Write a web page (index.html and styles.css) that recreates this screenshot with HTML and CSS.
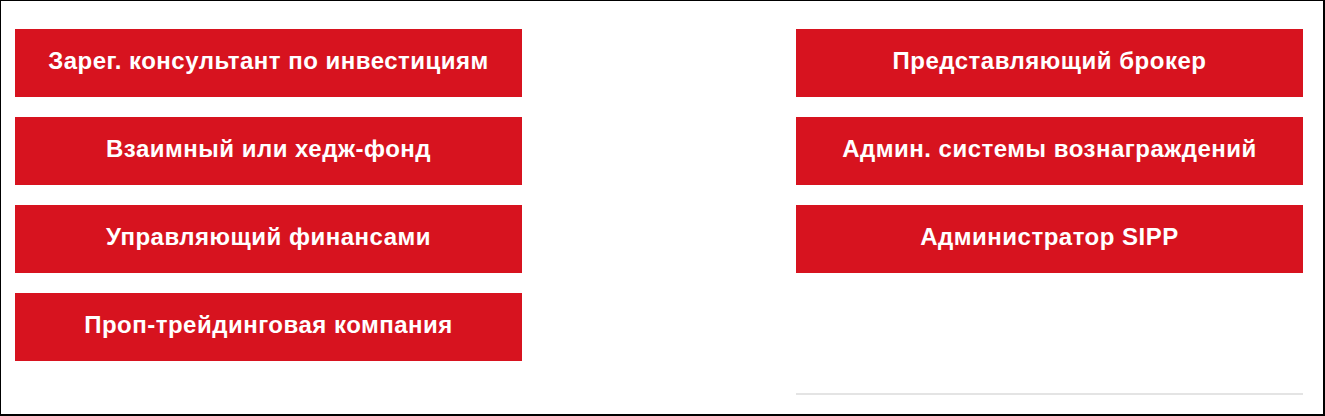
FILE: index.html
```html
<!DOCTYPE html>
<html lang="ru">
<head>
    <meta charset="UTF-8">
    <meta name="viewport" content="width=device-width, initial-scale=1.0">
    <title>Типы клиентов</title>
    <link rel="stylesheet" href="styles.css">
</head>
<body>

<div class="frame">
    <div class="column">
        <a class="type-btn" href="#">Зарег. консультант по инвестициям</a>
        <a class="type-btn" href="#">Взаимный или хедж-фонд</a>
        <a class="type-btn" href="#">Управляющий финансами</a>
        <a class="type-btn" href="#">Проп-трейдинговая компания</a>
    </div>
    <div class="column">
        <a class="type-btn" href="#">Представляющий брокер</a>
        <a class="type-btn" href="#">Админ. системы вознаграждений</a>
        <a class="type-btn" href="#">Администратор SIPP</a>
        <div class="divider"></div>
    </div>
</div>

</body>
</html>
```

FILE: styles.css
```css
body {
    margin: 0;
    font-family: "Liberation Sans", Arial, sans-serif;
    background-color: #ffffff;
}
.frame {
    box-sizing: border-box;
    width: 1325px;
    height: 416px;
    border-style: solid;
    border-color: #000000;
    border-width: 1px 2px 2px 1px;
    padding: 28px 20px 0 14px;
    display: grid;
    grid-template-columns: 507px 507px;
    column-gap: 274px;
    align-items: start;
}
.column {
    display: flex;
    flex-direction: column;
    gap: 20px;
}
.type-btn {
    box-sizing: border-box;
    height: 68px;
    padding-bottom: 4px;
    display: flex;
    align-items: center;
    justify-content: center;
    background-color: #d7131f;
    color: #ffffff;
    font-size: 24px;
    font-weight: bold;
    letter-spacing: 0.5px;
    text-decoration: none;
}
.divider {
    margin-top: 100px;
    height: 2px;
    background-color: #e4e4e4;
}
```
